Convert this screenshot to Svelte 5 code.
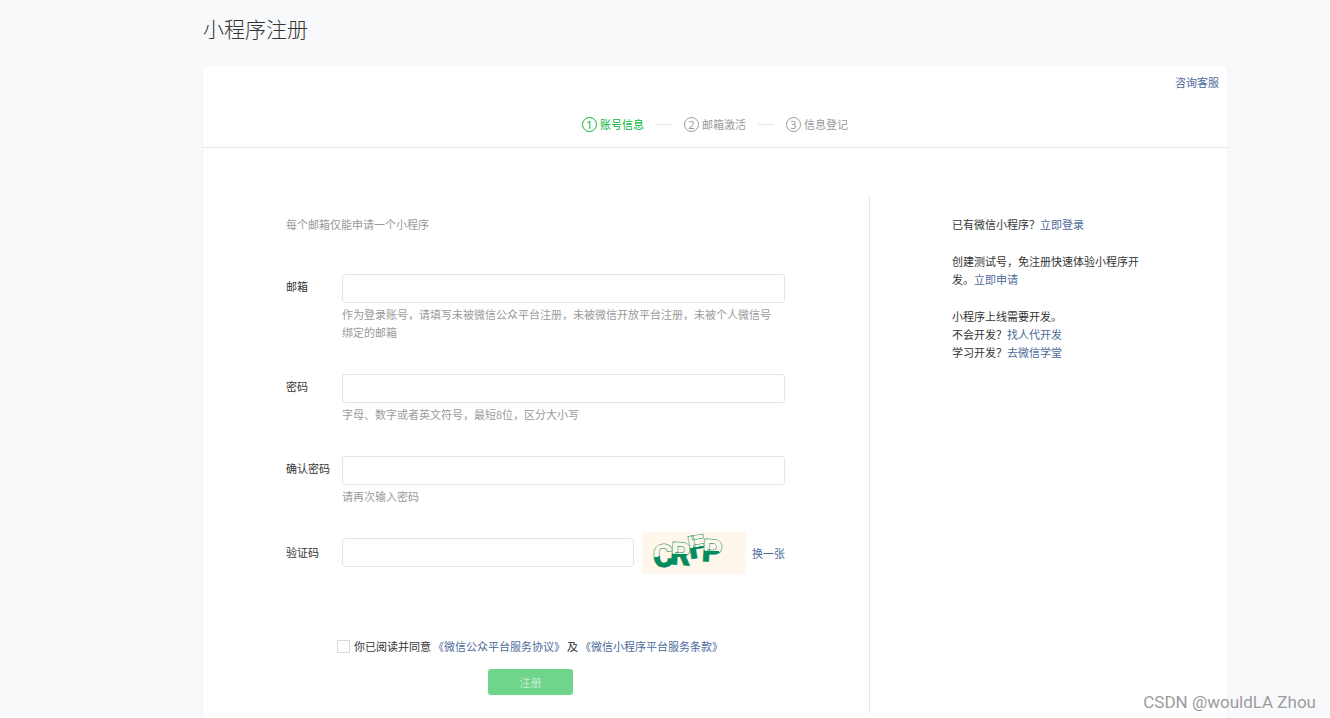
<script>
  const steps = ['账号信息', '邮箱激活', '信息登记'];
  const current = 0;
  let agreed = $state(false);
</script>

<div class="page">
  <h1>小程序注册</h1>

  <main class="card">
    <header>
      <a class="service" href="#service">咨询客服</a>
      <ol class="steps">
        {#each steps as step, i}
          <li class:active={i === current}><span class="num">{i + 1}</span>{step}</li>
        {/each}
      </ol>
    </header>

    <div class="body">
      <form class="form" onsubmit={(e) => e.preventDefault()}>
        <p class="intro">每个邮箱仅能申请一个小程序</p>

        <div class="field">
          <label for="email">邮箱</label>
          <div class="control">
            <input id="email" type="text" />
            <p class="hint">作为登录账号，请填写未被微信公众平台注册，未被微信开放平台注册，未被个人微信号绑定的邮箱</p>
          </div>
        </div>
        <div class="field">
          <label for="password">密码</label>
          <div class="control">
            <input id="password" type="password" />
            <p class="hint">字母、数字或者英文符号，最短8位，区分大小写</p>
          </div>
        </div>
        <div class="field">
          <label for="confirm">确认密码</label>
          <div class="control">
            <input id="confirm" type="password" />
            <p class="hint">请再次输入密码</p>
          </div>
        </div>
        <div class="field verify">
          <label for="code">验证码</label>
          <div class="control row">
            <input id="code" type="text" />
            <svg class="captcha" viewBox="0 0 104 42" role="img" aria-label="验证码">
              <defs>
                <linearGradient id="half" x1="0" y1="0" x2="0" y2="1">
                  <stop offset="0.5" stop-color="#fff7eb" />
                  <stop offset="0.5" stop-color="#068c5c" />
                </linearGradient>
              </defs>
              <rect width="104" height="42" fill="#fff7eb" />
              <g class="glyphs" fill="url(#half)">
                <text x="11" y="35" transform="rotate(-6 21 25)">C</text>
                <text x="28" y="33" transform="rotate(4 38 24)">R</text>
                <text x="46" y="26" transform="rotate(-10 54 15)">F</text>
                <text x="60" y="30" transform="rotate(4 70 18)">P</text>
              </g>
            </svg>
            <a href="#refresh">换一张</a>
          </div>
        </div>

        <div class="agree">
          <input id="agree" type="checkbox" bind:checked={agreed} />
          <label for="agree">你已阅读并同意</label>
          <a href="#platform">《微信公众平台服务协议》</a>
          <span>及</span>
          <a href="#terms">《微信小程序平台服务条款》</a>
        </div>
        <button type="submit">注册</button>
      </form>

      <aside>
        <p>已有微信小程序？<a href="#login">立即登录</a></p>
        <p>创建测试号，免注册快速体验小程序开发。<a href="#apply">立即申请</a></p>
        <p>
          小程序上线需要开发。<br />
          不会开发？<a href="#hire">找人代开发</a><br />
          学习开发？<a href="#school">去微信学堂</a>
        </p>
      </aside>
    </div>
  </main>

  <div class="watermark">CSDN @wouldLA Zhou</div>
</div>

<style>
  :global(body) {
    margin: 0;
    background: #f8f9fb;
  }
  .page {
    position: relative;
    box-sizing: border-box;
    height: 100vh;
    overflow: hidden;
    padding: 0 103px 0 203px;
    font: 11px/18px "Noto Sans CJK SC", sans-serif;
    color: #353535;
  }
  h1 {
    margin: 0;
    padding: 13px 0 23px;
    font-size: 21px;
    line-height: 30px;
    font-weight: 300;
  }
  p {
    margin: 0;
  }
  a {
    color: #4c6a9b;
    text-decoration: none;
  }
  .card {
    min-height: 100%;
    background: #fff;
    border-radius: 4px;
    box-shadow: 0 1px 2px rgba(0, 0, 0, 0.08);
  }
  header {
    display: flex;
    flex-direction: column;
    padding: 7px 8px 14px;
    border-bottom: 1px solid #e4e4e6;
  }
  .service {
    align-self: flex-end;
  }
  .steps {
    display: flex;
    justify-content: center;
    gap: 12px;
    margin: 0;
    padding: 24px 0 0;
    list-style: none;
    color: #9a9a9a;
  }
  .steps li {
    display: flex;
    align-items: center;
    gap: 3px;
  }
  .steps li + li::before {
    content: "";
    width: 16px;
    margin-right: 9px;
    border-top: 1px solid #e4e4e6;
  }
  .steps .active {
    color: #09b33c;
  }
  .num {
    box-sizing: border-box;
    width: 15px;
    height: 15px;
    border: 1px solid currentColor;
    border-radius: 50%;
    font-family: "Noto Sans", sans-serif;
    line-height: 13px;
    text-align: center;
  }
  .body {
    display: flex;
    padding-top: 48px;
  }
  .form {
    flex: 1;
    display: flex;
    flex-direction: column;
    padding: 19px 84px 18px 83px;
    border-right: 1px solid #e7e7eb;
  }
  .intro {
    margin-bottom: 41px;
    color: #9a9a9a;
  }
  .field {
    display: flex;
    margin-bottom: 32px;
  }
  .field label {
    width: 56px;
    padding-top: 3px;
  }
  .control {
    flex: 1;
  }
  .control input {
    box-sizing: border-box;
    display: block;
    width: 100%;
    height: 29px;
    padding: 0 8px;
    border: 1px solid #e4e4e8;
    border-radius: 3px;
    background: #fff;
    font: inherit;
    color: inherit;
    outline: 0;
  }
  .hint {
    padding: 2px 8px 1px 0;
    color: #9a9a9a;
  }
  .verify {
    align-items: center;
    margin: -6px 0 63px;
  }
  .verify label {
    padding: 0 0 2px;
  }
  .row {
    display: flex;
    align-items: center;
  }
  .row input {
    flex: 1;
    width: auto;
    min-width: 0;
    margin-bottom: 2px;
  }
  .captcha {
    width: 104px;
    height: 42px;
    margin: 0 6px 0 8px;
  }
  .glyphs {
    font: 900 32px Roboto, sans-serif;
    stroke: #068c5c;
    stroke-width: 0.5px;
  }
  .agree {
    display: flex;
    align-items: center;
    margin: 0 0 14px 51px;
  }
  .agree input {
    appearance: none;
    width: 13px;
    height: 13px;
    margin: 0 4px 0 0;
    border: 1px solid #d9d9d9;
    background: #fff;
  }
  .agree input:checked {
    background: #09b33c;
  }
  .agree a {
    margin: 0 2px;
  }
  button {
    align-self: center;
    width: 85px;
    height: 26px;
    margin-right: 10px;
    padding: 0;
    border: 0;
    border-radius: 3px;
    background: #6ed58b;
    color: #c5eed0;
    font: inherit;
  }
  aside {
    box-sizing: border-box;
    width: 357px;
    padding: 19px 84px 0 82px;
  }
  aside p {
    margin-bottom: 19px;
  }
  .watermark {
    position: absolute;
    right: 14px;
    bottom: 4px;
    font: 17px/24px Roboto, sans-serif;
    color: #9b9b9e;
    text-shadow: 0 1px 1px #fff;
  }
</style>
